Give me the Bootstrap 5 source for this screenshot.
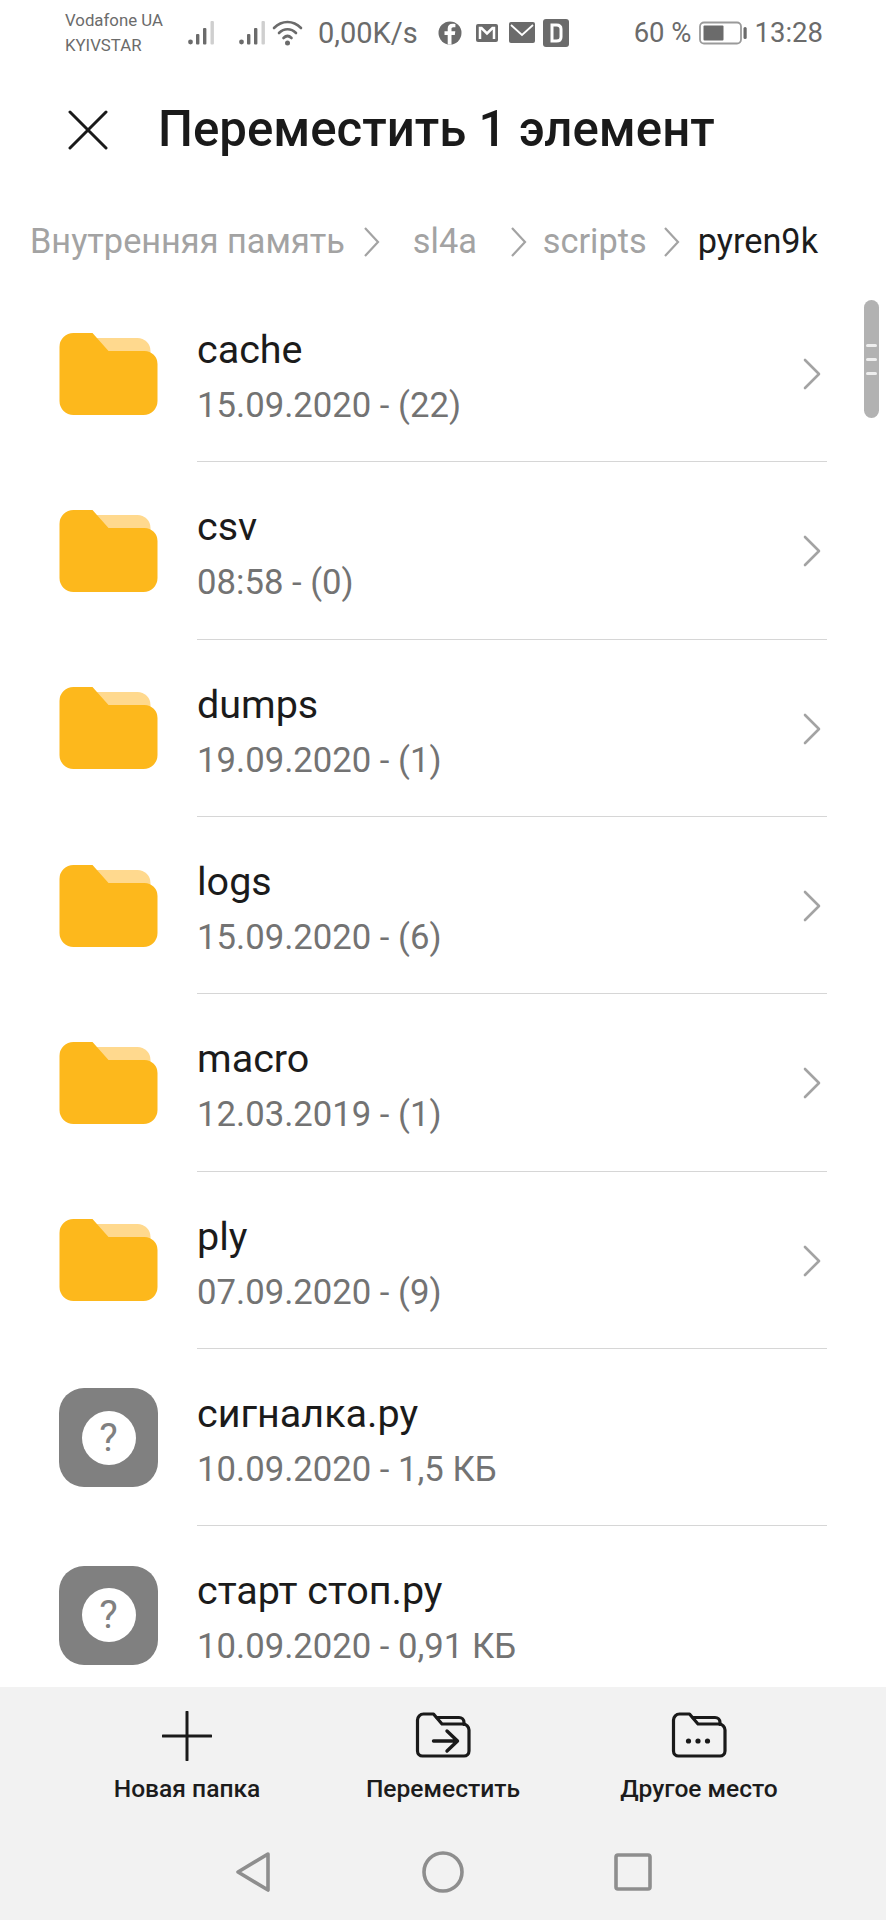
<!DOCTYPE html>
<html lang="ru">
<head>
<meta charset="utf-8">
<title>Переместить 1 элемент</title>
<link href="https://cdn.jsdelivr.net/npm/bootstrap@5.3.0/dist/css/bootstrap.min.css" rel="stylesheet">
<style>
  html, body { height: 100%; }
  body { font-family: Roboto, "Liberation Sans", sans-serif; background: #fff; color: #191919; overflow: hidden; }
  .phone { width: 886px; height: 1920px; position: relative; overflow: hidden; }

  /* status bar */
  .status { height: 62px; padding: 4px 63px 0 65px; color: #6b6b6b; }
  .carriers { width: 119px; font-size: 16.8px; line-height: 25px; }
  .sig { width: 27px; height: 24px; display: block; }
  .speed { font-size: 29px; line-height: 1; margin-left: 15px; width: 103px; }
  .noti { width: 26px; height: 28px; display: block; }
  .batt-pct { font-size: 27.5px; line-height: 1; }
  .clock { font-size: 27.5px; line-height: 1; }

  /* title row */
  .head { height: 136px; padding-left: 68px; }
  .close-x { width: 40px; height: 40px; display: block; }
  .head-title { font-size: 49.2px; font-weight: 500; line-height: 1; margin: 0 0 0 50px; color: #1a1a1a; }

  /* path trail */
  .trail { height: 87px; padding-left: 30px; font-size: 34.3px; line-height: 1; color: #a3a3a3; }
  .trail-now { color: #1c1c1c; }
  .trail-sep { width: 17px; height: 32px; display: block; flex: none; }

  /* file rows */
  .files { height: 1402px; overflow: hidden; }
  .file-row { height: 177.35px; padding-left: 59px; }
  .file-ic { width: 99px; flex: none; display: block; }
  .file-body { margin-left: 39px; width: 630px; height: 100%; border-bottom: 1.5px solid #d6d6d6; padding-top: 42px; position: relative; }
  .file-name { font-size: 39.5px; line-height: 46px; color: #1b1b1b; }
  .file-meta { font-size: 34.7px; line-height: 40px; margin-top: 12px; color: #737373; }
  .file-row:last-child .file-body { border-bottom: 0; }
  .file-go { width: 18px; height: 32px; display: block; position: absolute; right: 6px; top: 73px; }
  .unk { width: 99px; height: 99px; border-radius: 25px; background: #808080; flex: none; }
  .unk-dot { width: 54px; height: 54px; border-radius: 50%; background: #fff; color: #808080; font-size: 39px; line-height: 54px; text-align: center; }

  /* overlay scroll thumb */
  .thumb { position: absolute; left: 864px; top: 300px; width: 15px; height: 118px; border-radius: 8px; background: #b2b2b2; padding-top: 44px; }
  .thumb i { display: block; width: 11px; height: 3px; margin: 0 auto 11px; background: #eeeeee; border-radius: 2px; }

  /* bottom bar */
  .bottom { background: #f2f2f2; height: 233px; }
  .actions { padding: 24px 59px 0; }
  .act { width: 256px; }
  .act-ic { height: 50px; display: block; }
  .act-label { font-size: 24.6px; font-weight: 500; line-height: 28px; margin-top: 14px; color: #1c1c1c; }
  .sysnav { margin-top: 48px; }
  .sysnav svg { display: block; }
</style>
</head>
<body>
<svg width="0" height="0" class="d-none">
  <symbol id="s-folder" viewBox="0 0 98 82">
    <path fill="#ffd98e" d="M33 5h45a13 13 0 0 1 13 13v8H40z"/>
    <path fill="#fdb81c" d="M14 0h19l16 18h36a13 13 0 0 1 13 13v37a14 14 0 0 1-14 14H14A14 14 0 0 1 0 68V14A14 14 0 0 1 14 0z"/>
  </symbol>
  <symbol id="s-chev" viewBox="0 0 18 32">
    <path d="M2 2l14 14L2 30" fill="none" stroke="#a3a3a3" stroke-width="2.6" stroke-linecap="round" stroke-linejoin="round"/>
  </symbol>
  <symbol id="s-sep" viewBox="0 0 17 32">
    <path d="M2 2l13 14L2 30" fill="none" stroke="#a3a3a3" stroke-width="2.2"/>
  </symbol>
  <symbol id="s-signal" viewBox="0 0 27 24">
    <circle cx="2.5" cy="21" r="2.4" fill="#6b6b6b"/>
    <rect x="8" y="13" width="3.4" height="10.5" rx="1" fill="#6b6b6b"/>
    <rect x="15" y="7" width="3.4" height="16.5" rx="1" fill="#6b6b6b"/>
    <rect x="22.5" y="0" width="3.4" height="23.5" rx="1" fill="#cfcfcf"/>
  </symbol>
  <symbol id="s-outline" viewBox="0 0 56 50">
    <g fill="none" stroke="#1a1a1a" stroke-width="3.200" stroke-linejoin="round" stroke-linecap="round">
      <path d="M2.500 9a6 6 0 0 1 6-6h10l8.500 10h21a6 6 0 0 1 6 6v21a5 5 0 0 1-5 5H7.500a5 5 0 0 1-5-5z"/>
      <path d="M22 6.500h22a5 5 0 0 1 5 5v2"/>
    </g>
  </symbol>
</svg>

<div class="phone">
  <div class="status d-flex align-items-center">
    <div class="carriers"><div>Vodafone UA</div><div>KYIVSTAR</div></div>
    <svg class="sig ms-1"><use href="#s-signal"/></svg>
    <svg class="sig ms-4"><use href="#s-signal"/></svg>
    <svg width="31" height="26" viewBox="0 0 31 26" class="d-block" style="margin-left:6px">
      <g fill="none" stroke="#6b6b6b" stroke-width="2.6" stroke-linecap="round">
        <path d="M2 8C10 0 21 0 29 8"/><path d="M7 13c5-5 12-5 17 0"/><path d="M11.5 18c2.500-2.500 5.500-2.500 8 0"/>
      </g>
      <circle cx="15.500" cy="23" r="2.500" fill="#6b6b6b"/>
    </svg>
    <div class="speed">0,00K/s</div>
    <svg class="noti ms-3" viewBox="0 0 24 28" width="24" height="28">
      <circle cx="12" cy="14" r="11.500" fill="#6b6b6b"/>
      <path d="M13.500 25.500V16h3.300l.5-3.800h-3.800V10c0-1.100.4-1.800 1.900-1.800h2V4.900c-.4-.1-1.500-.2-2.900-.2-2.900 0-4.800 1.700-4.800 4.900v2.600H6.500V16h3.200v9.500z" fill="#fff"/>
    </svg>
    <svg class="noti" style="margin-left:11px" viewBox="0 0 24 28" width="24" height="28">
      <rect x="1" y="5" width="22" height="18" rx="2" fill="#6b6b6b"/>
      <path d="M5 20V9h1.500l5.500 5.500L17.500 9H19v11" fill="none" stroke="#fff" stroke-width="2.500"/>
    </svg>
    <svg class="noti" style="margin-left:9px" viewBox="0 0 26 28" width="26" height="28">
      <rect x="0" y="3" width="26" height="21" rx="2" fill="#6b6b6b"/>
      <path d="M2 6l11 10L24 6" fill="none" stroke="#fff" stroke-width="1.800"/>
    </svg>
    <svg class="noti" style="margin-left:8px" viewBox="0 0 26 28" width="26" height="28">
      <rect x="0" y="0" width="26" height="28" rx="3" fill="#6b6b6b"/>
      <path d="M9 6h4.500c3 0 4.500 1.500 4.500 4v8c0 2.500-1.500 4-4.500 4H9z" fill="none" stroke="#fff" stroke-width="3"/>
    </svg>
    <div class="batt-pct ms-auto">60 %</div>
    <svg width="48" height="24" viewBox="0 0 48 24" class="d-block" style="margin:0 8px 0 7px">
      <rect x="1" y="1.500" width="41" height="21" rx="4" fill="none" stroke="#9a9a9a" stroke-width="1.800"/>
      <rect x="4.500" y="4.500" width="20" height="15" rx="1" fill="#6b6b6b"/>
      <rect x="44.500" y="6" width="3.200" height="12" rx="1.500" fill="#6b6b6b"/>
    </svg>
    <div class="clock">13:28</div>
  </div>

  <header class="head d-flex align-items-center">
    <svg class="close-x" viewBox="0 0 40 40"><path d="M2 2l36 36M38 2L2 38" stroke="#1a1a1a" stroke-width="3" stroke-linecap="round"/></svg>
    <h1 class="head-title">Переместить 1 элемент</h1>
  </header>

  <nav class="trail d-flex align-items-center">
    <span>Внутренняя память</span>
    <svg class="trail-sep" style="margin-left:18px"><use href="#s-sep"/></svg>
    <span style="margin-left:33px">sl4a</span>
    <svg class="trail-sep" style="margin-left:33px"><use href="#s-sep"/></svg>
    <span style="margin-left:16px">scripts</span>
    <svg class="trail-sep" style="margin-left:16px"><use href="#s-sep"/></svg>
    <span class="trail-now" style="margin-left:18px">pyren9k</span>
  </nav>

  <main class="files">
    <div class="file-row d-flex align-items-center"><svg class="file-ic" height="82"><use href="#s-folder"/></svg>
      <div class="file-body"><div class="file-name">cache</div><div class="file-meta">15.09.2020 - (22)</div><svg class="file-go"><use href="#s-chev"/></svg></div></div>
    <div class="file-row d-flex align-items-center"><svg class="file-ic" height="82"><use href="#s-folder"/></svg>
      <div class="file-body"><div class="file-name">csv</div><div class="file-meta">08:58 - (0)</div><svg class="file-go"><use href="#s-chev"/></svg></div></div>
    <div class="file-row d-flex align-items-center"><svg class="file-ic" height="82"><use href="#s-folder"/></svg>
      <div class="file-body"><div class="file-name">dumps</div><div class="file-meta">19.09.2020 - (1)</div><svg class="file-go"><use href="#s-chev"/></svg></div></div>
    <div class="file-row d-flex align-items-center"><svg class="file-ic" height="82"><use href="#s-folder"/></svg>
      <div class="file-body"><div class="file-name">logs</div><div class="file-meta">15.09.2020 - (6)</div><svg class="file-go"><use href="#s-chev"/></svg></div></div>
    <div class="file-row d-flex align-items-center"><svg class="file-ic" height="82"><use href="#s-folder"/></svg>
      <div class="file-body"><div class="file-name">macro</div><div class="file-meta">12.03.2019 - (1)</div><svg class="file-go"><use href="#s-chev"/></svg></div></div>
    <div class="file-row d-flex align-items-center"><svg class="file-ic" height="82"><use href="#s-folder"/></svg>
      <div class="file-body"><div class="file-name">ply</div><div class="file-meta">07.09.2020 - (9)</div><svg class="file-go"><use href="#s-chev"/></svg></div></div>
    <div class="file-row d-flex align-items-center"><div class="unk d-flex align-items-center justify-content-center"><div class="unk-dot">?</div></div>
      <div class="file-body"><div class="file-name">сигналка.ру</div><div class="file-meta">10.09.2020 - 1,5 КБ</div></div></div>
    <div class="file-row d-flex align-items-center"><div class="unk d-flex align-items-center justify-content-center"><div class="unk-dot">?</div></div>
      <div class="file-body"><div class="file-name">старт стоп.ру</div><div class="file-meta">10.09.2020 - 0,91 КБ</div></div></div>
  </main>

  <div class="thumb"><i></i><i></i><i></i></div>

  <footer class="bottom">
    <div class="actions d-flex">
      <div class="act d-flex flex-column align-items-center">
        <svg class="act-ic" width="50" viewBox="0 0 50 50"><path d="M25 1v48M1 25h48" stroke="#1a1a1a" stroke-width="3" stroke-linecap="round"/></svg>
        <div class="act-label">Новая папка</div>
      </div>
      <div class="act d-flex flex-column align-items-center">
        <svg class="act-ic" width="56" viewBox="0 0 56 50">
          <use href="#s-outline"/>
          <path d="M18.500 30h24M32 20l10.500 10L32 40" fill="none" stroke="#1a1a1a" stroke-width="3.400" stroke-linejoin="round" stroke-linecap="round"/>
        </svg>
        <div class="act-label">Переместить</div>
      </div>
      <div class="act d-flex flex-column align-items-center">
        <svg class="act-ic" width="56" viewBox="0 0 56 50">
          <use href="#s-outline"/>
          <circle cx="17.500" cy="30" r="2.600" fill="#1a1a1a"/><circle cx="27" cy="30" r="2.600" fill="#1a1a1a"/><circle cx="36.500" cy="30" r="2.600" fill="#1a1a1a"/>
        </svg>
        <div class="act-label">Другое место</div>
      </div>
    </div>
    <div class="sysnav d-flex justify-content-center align-items-center">
      <svg width="36" height="42" viewBox="0 0 36 42"><path d="M33 3L3 21l30 18z" fill="none" stroke="#8e8e8e" stroke-width="3.600" stroke-linejoin="round"/></svg>
      <svg width="42" height="42" viewBox="0 0 42 42" style="margin-left:151px"><circle cx="21" cy="21" r="19" fill="none" stroke="#8e8e8e" stroke-width="3.600"/></svg>
      <svg width="38" height="38" viewBox="0 0 38 38" style="margin-left:150px"><rect x="2" y="2" width="34" height="34" rx="2" fill="none" stroke="#8e8e8e" stroke-width="3.600"/></svg>
    </div>
  </footer>
</div>
<script src="https://cdn.jsdelivr.net/npm/bootstrap@5.3.0/dist/js/bootstrap.bundle.min.js"></script>
</body>
</html>
